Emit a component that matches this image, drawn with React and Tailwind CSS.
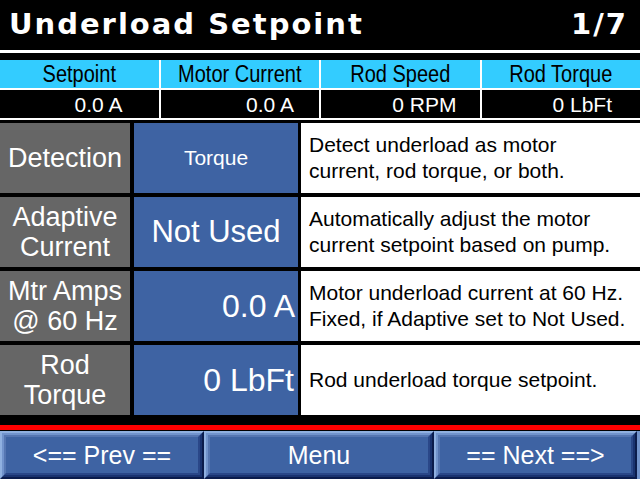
import React from "react";

const F = { fontFamily: '"Liberation Sans", Arial, sans-serif' };

function Bevel({ w, label }) {
  return (
    <div className={`${w} h-full border-t-2 border-l-2 border-b-2 border-r-2 border-t-[#8fb0e0] border-l-[#8fb0e0] border-b-[#0b1c4c] border-r-[#0b1c4c]`}>
      <div className="w-full h-full border-t-2 border-l-2 border-b-2 border-r-2 border-t-[#7193cc] border-l-[#7193cc] border-b-[#1a3370] border-r-[#1a3370]">
        <div className="w-full h-full border-t-2 border-l-2 border-b-2 border-r-2 border-t-[#5576b2] border-l-[#5576b2] border-b-[#2a4788] border-r-[#2a4788] bg-[#3e63a3] flex items-center justify-center text-white text-[25px] leading-none">
          {label}
        </div>
      </div>
    </div>
  );
}

function Row({ label, value, desc, valueClass, labelLines }) {
  return (
    <div className="flex h-[70px]">
      <div className="w-[130px] bg-[#666666] flex flex-col items-center justify-center text-white text-[27px] leading-[30px]">
        {labelLines.map((l) => (
          <div key={l}>{l}</div>
        ))}
      </div>
      <div className={`ml-[4px] w-[164px] bg-[#3e63a3] flex items-center text-white ${valueClass}`}>
        {value}
      </div>
      <div className="ml-[3px] flex-1 bg-white flex flex-col justify-center pl-[8px] text-black text-[21px] leading-[26px]">
        {desc.map((d) => (
          <div key={d} className="whitespace-nowrap">{d}</div>
        ))}
      </div>
    </div>
  );
}

export default function App() {
  const heads = ["Setpoint", "Motor Current", "Rod Speed", "Rod Torque"];
  const vals = [
    ["0.0 A", "pr-[36px]"],
    ["0.0 A", "pr-[25px]"],
    ["0 RPM", "pr-[23px]"],
    ["0 LbFt", "pr-[28px]"],
  ];
  return (
    <div className="w-[640px] h-[479px] bg-black flex flex-col overflow-hidden" style={F}>
      <div className="h-[50px] flex items-center justify-between pl-[9px] pr-[12px] text-white font-bold text-[29px] tracking-[2px]" style={{ fontFamily: '"DejaVu Sans", sans-serif' }}>
        <span>Underload Setpoint</span>
        <span>1/7</span>
      </div>
      <div className="h-[3px] bg-white" />
      <div className="h-[7px]" />
      <div className="grid grid-cols-4 gap-[2px] bg-white pb-[2px]">
        {heads.map((h) => (
          <div key={h} className="h-[28px] bg-[#33ccff] flex items-center justify-center text-black text-[20px] leading-none">
            <span className="inline-block scale-y-[1.15]">{h}</span>
          </div>
        ))}
        {vals.map(([v, p], i) => (
          <div key={i} className={`h-[28px] bg-black flex items-center justify-end text-white text-[21px] leading-none ${p}`}>
            {v}
          </div>
        ))}
      </div>
      <div className="flex flex-col gap-[4px] pt-[3px]">
        <Row
          labelLines={["Detection"]}
          value="Torque"
          valueClass="justify-center text-[21px]"
          desc={["Detect underload as motor", "current, rod torque, or both."]}
        />
        <Row
          labelLines={["Adaptive", "Current"]}
          value="Not Used"
          valueClass="justify-center text-[31px]"
          desc={["Automatically adjust the motor", "current setpoint based on pump."]}
        />
        <Row
          labelLines={["Mtr Amps", "@ 60 Hz"]}
          value="0.0 A"
          valueClass="justify-end pr-[3px] text-[32px]"
          desc={["Motor underload current at 60 Hz.", "Fixed, if Adaptive set to Not Used."]}
        />
        <Row
          labelLines={["Rod", "Torque"]}
          value="0 LbFt"
          valueClass="justify-end pr-[4px] text-[32px]"
          desc={["Rod underload torque setpoint."]}
        />
      </div>
      <div className="h-[10px]" />
      <div className="h-[5px] bg-[#ff0000]" />
      <div className="h-[1px]" />
      <div className="flex h-[48px]">
        <Bevel w="w-[204px]" label="<== Prev ==" />
        <Bevel w="w-[230px]" label="Menu" />
        <Bevel w="w-[203px]" label="== Next ==>" />
        <div className="w-[3px] h-full bg-[#7193cc]" />
      </div>
    </div>
  );
}
